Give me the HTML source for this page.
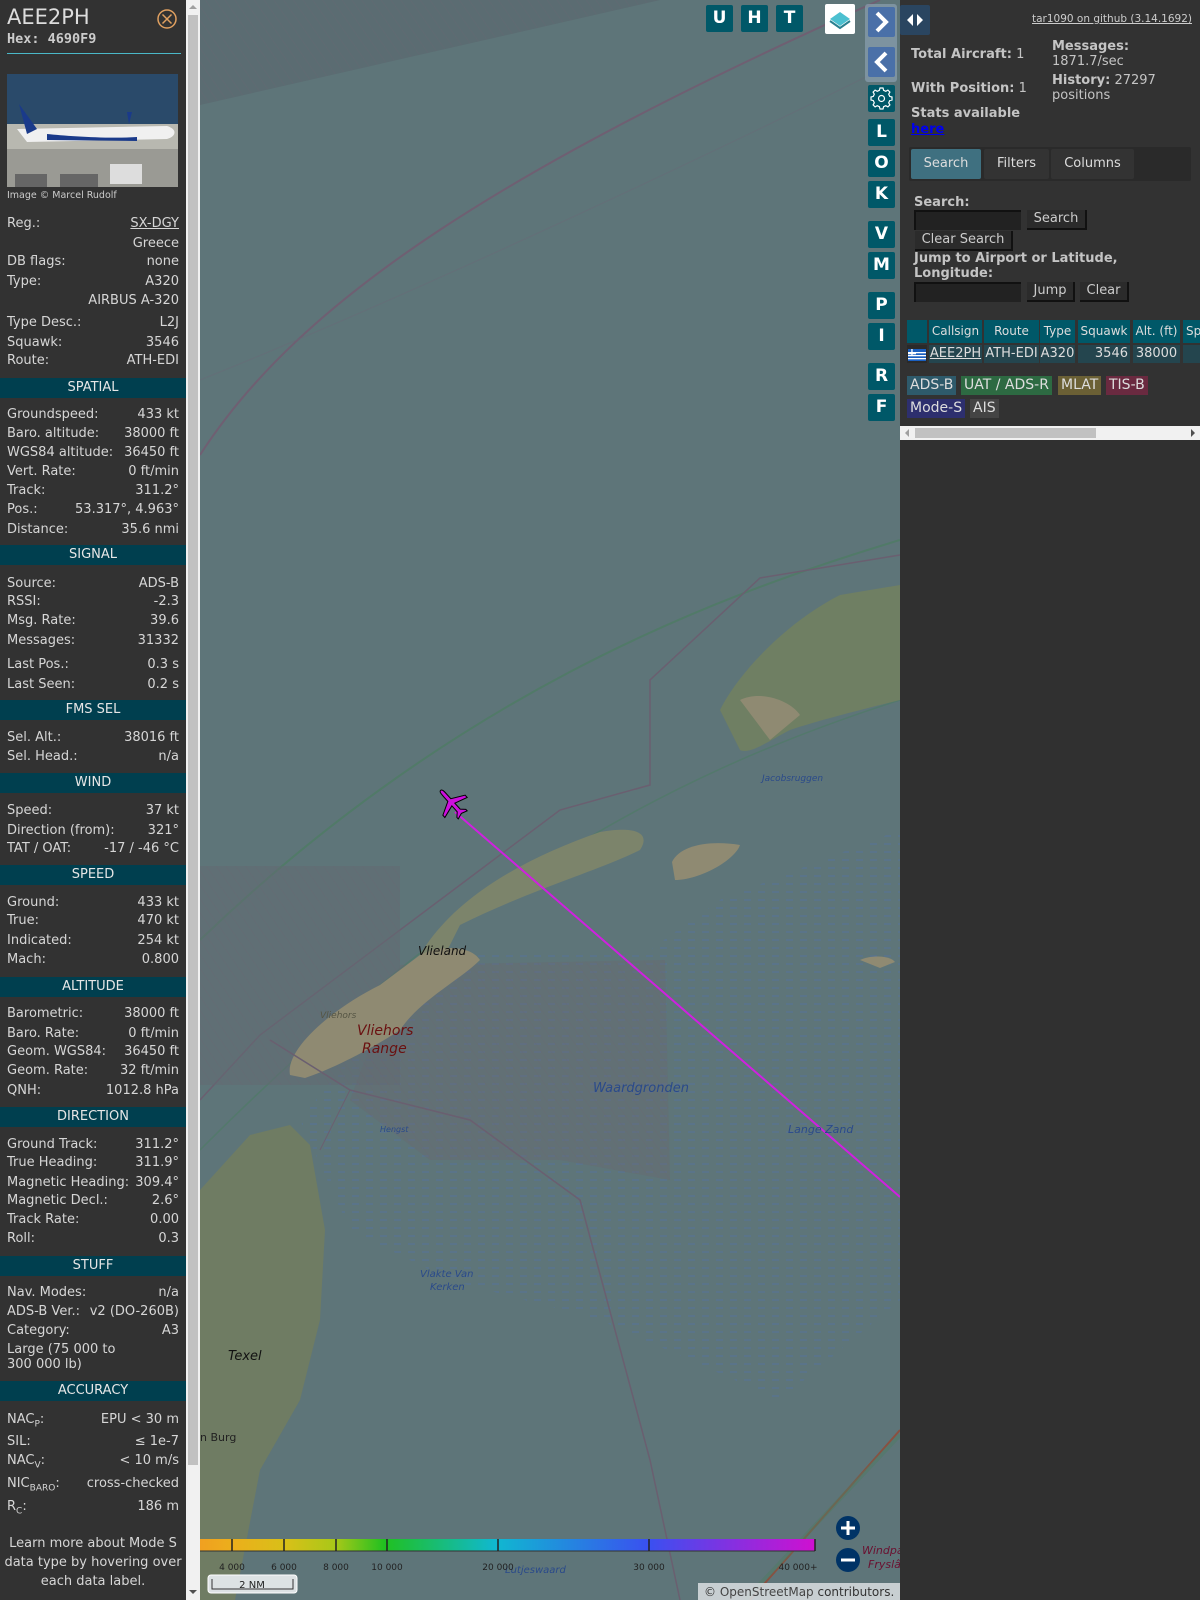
<!DOCTYPE html>
<html><head><meta charset="utf-8"><style>
*{box-sizing:border-box;margin:0;padding:0}
body{width:1200px;height:1600px;overflow:hidden;background:#5e7579;font-family:"DejaVu Sans","Liberation Sans",sans-serif;position:relative}
#left{position:absolute;left:0;top:0;width:186px;height:1600px;background:#323232;color:#d6d6d6;font-size:13px}
.r{position:absolute;left:7px;right:7px;height:16px;line-height:16px;white-space:nowrap;margin-top:2px}
.r b{position:absolute;right:0;top:0;font-weight:normal}
.h{position:absolute;left:0;width:186px;height:20px;line-height:20px;background:#003f4f;text-align:center;color:#e6e6e6;font-size:13px;margin-top:1px}
#lsb{position:absolute;left:186px;top:0;width:14px;height:1600px;background:#f1f1f1}
#map{position:absolute;left:200px;top:0;width:700px;height:1600px;overflow:hidden}
.btn{position:absolute;width:27px;height:27px;background:#005868;color:#fff;font-weight:bold;font-size:17px;text-align:center;line-height:27px;border-radius:2px}
#right{position:absolute;left:900px;top:0;width:300px;height:1600px;background:#303030;color:#c4c4c4;font-size:13px}
#rp{position:absolute;left:0;top:0;width:300px;height:426px;background:#323232}
.a{position:absolute;white-space:nowrap}
.tb{position:absolute;height:30px;line-height:30px;text-align:center;font-size:13px;color:#ddd;border-radius:2px}
.inp{position:absolute;height:20px;background:#222;border-top:2px solid #111;border-left:2px solid #111}
.bt{position:absolute;height:20px;line-height:18px;background:#2b2b2b;color:#ccc;border-right:2px solid #111;border-bottom:2px solid #111;font-size:13px;text-align:center}
.th{position:absolute;top:320px;height:23px;line-height:23px;background:#005868;color:#ddd;font-size:12px;text-align:center}
.td{position:absolute;top:345px;height:18px;line-height:18px;background:#24454e;color:#ddd;font-size:13px}
.lg{position:absolute;height:19px;line-height:19px;font-size:14px;color:#ddd;padding:0 3px}
</style></head><body>

<div id="map">
<svg width="700" height="1600" viewBox="200 0 700 1600" xmlns="http://www.w3.org/2000/svg">
<defs>
<pattern id="ht" width="8" height="8" patternUnits="userSpaceOnUse" patternTransform="rotate(-35)"><line x1="0" y1="0" x2="0" y2="8" stroke="#6d6470" stroke-width="1" opacity=".4"/></pattern>
<pattern id="wd" width="14" height="8" patternUnits="userSpaceOnUse"><line x1="2" y1="4" x2="9" y2="4" stroke="#4a6ec0" stroke-width="1" opacity=".45"/></pattern>
</defs>
<rect x="200" y="0" width="700" height="1600" fill="#5e7579"/>
<polygon points="200,0 660,0 200,105" fill="#5b6c72"/>
<polygon points="200,0 660,0 200,105" fill="url(#ht)"/>
<path d="M200,455 C300,300 500,170 880,0" stroke="#6f5f72" stroke-width="2" fill="none"/>
<path d="M200,380 C400,300 700,160 900,60" stroke="#6a6a78" stroke-width="1" fill="none" opacity=".5"/>
<path d="M200,940 C450,700 700,600 900,540" stroke="#4d7c64" stroke-width="2" fill="none" opacity=".8"/>
<path d="M200,1150 C450,900 650,780 900,700" stroke="#4d7c64" stroke-width="1.5" fill="none" opacity=".6"/>
<polyline points="200,1100 260,1035 480,870 560,810 650,785 650,680 760,578 900,555" stroke="#6a5f70" stroke-width="1.5" fill="none"/>
<polygon points="380,1020 470,950 650,950 720,900 900,830 900,1300 780,1400 600,1320 450,1280 350,1230 300,1120" fill="url(#wd)"/>
<polygon points="400,965 665,960 670,1180 560,1160 430,1160 350,1100" fill="#6a6670" opacity=".35"/>
<polygon points="400,965 665,960 670,1180 560,1160 430,1160 350,1100" fill="url(#ht)"/>
<polygon points="200,866 400,866 400,1085 200,1085" fill="#626a72" opacity=".5"/>
<polygon points="200,866 400,866 400,1085 200,1085" fill="url(#ht)"/>
<path d="M720,710 C740,670 790,620 840,595 L900,585 L900,700 C860,710 820,720 790,730 C770,740 750,755 740,750 Z" fill="#6f7f63"/>
<path d="M740,700 C760,690 790,700 800,715 L770,740 Z" fill="#8f8a72"/>
<path d="M672,862 C680,845 710,840 740,845 C735,860 700,880 675,880 Z" fill="#8f8a72"/>
<path d="M417,960 C450,900 520,860 600,832 C640,825 650,835 640,850 C600,870 530,890 460,925 L445,955 Z" fill="#7c846b"/>
<path d="M290,1075 C285,1050 330,1010 380,985 L420,955 C440,945 470,945 480,960 C460,980 420,1000 400,1030 C370,1050 330,1070 305,1078 Z" fill="#8f8a72"/>
<path d="M200,1190 L250,1135 L290,1125 L310,1145 L325,1230 L320,1320 L300,1400 L260,1470 L235,1600 L200,1600 Z" fill="#6f7c63"/>
<path d="M860,960 C870,955 890,955 895,962 L880,968 Z" fill="#8f8a72"/>
<path d="M320,1150 L350,1090" stroke="#6a5f70" stroke-width="1" fill="none"/>
<polyline points="270,1040 350,1090 470,1120 580,1200 650,1460 680,1600" stroke="#6a5f70" stroke-width="1.5" fill="none"/>
<path d="M750,1600 L900,1430" stroke="#8a5040" stroke-width="2" fill="none"/>
<path d="M745,1600 L900,1435" stroke="#4d7c64" stroke-width="4" fill="none" opacity=".5"/>
<line x1="455" y1="812" x2="900" y2="1197" stroke="#d020e0" stroke-width="2"/>
<g transform="translate(452,803) rotate(-42)" fill="#cc10dd" stroke="#000" stroke-width="1">
<path d="M0,-17 C2,-17 2,-14 2,-10 L2,-4 L15,3 L15,6 L2,2 L2,10 L6,14 L6,16 L0,14 L-6,16 L-6,14 L-2,10 L-2,2 L-15,6 L-15,3 L-2,-4 L-2,-10 C-2,-14 -2,-17 0,-17 Z"/>
</g>
<g font-family="DejaVu Sans" font-style="italic">
<text x="418" y="955" font-size="12" fill="#111">Vlieland</text>
<text x="320" y="1018" font-size="9" fill="#554">Vliehors</text>
<text x="357" y="1035" font-size="14" fill="#6a1010">Vliehors</text>
<text x="362" y="1053" font-size="14" fill="#6a1010">Range</text>
<text x="593" y="1092" font-size="13" fill="#2a4a8a">Waardgronden</text>
<text x="788" y="1133" font-size="11" fill="#2a4a8a">Lange Zand</text>
<text x="228" y="1360" font-size="13" fill="#111">Texel</text>
<text x="200" y="1441" font-size="11" fill="#222" font-style="normal">n Burg</text>
<text x="762" y="781" font-size="9" fill="#2a4a8a">Jacobsruggen</text>
<text x="420" y="1277" font-size="10" fill="#2a4a8a">Vlakte Van</text>
<text x="430" y="1290" font-size="10" fill="#2a4a8a">Kerken</text>
<text x="505" y="1573" font-size="10" fill="#2a4a8a">Lutjeswaard</text>
<text x="380" y="1132" font-size="8" fill="#2a4a8a">Hengst</text>
<text x="862" y="1554" font-size="11" fill="#6a1030">Windpa</text>
<text x="868" y="1568" font-size="11" fill="#6a1030">Fryslâ</text>
</g>
<defs><linearGradient id="cb" x1="0" x2="1"><stop offset="0" stop-color="#f0a020"/><stop offset=".05" stop-color="#ecae1c"/><stop offset=".14" stop-color="#d8c018"/><stop offset=".22" stop-color="#a8c818"/><stop offset=".3" stop-color="#20c020"/><stop offset=".48" stop-color="#10b8d0"/><stop offset=".73" stop-color="#3a50f0"/><stop offset="1" stop-color="#d010d0"/></linearGradient></defs>
<rect x="200" y="1539" width="615" height="12" fill="url(#cb)"/>
<line x1="200" y1="1551" x2="815" y2="1551" stroke="#333" stroke-width="1"/>
<g stroke="#222" stroke-width="1.5"><line x1="232" y1="1539" x2="232" y2="1551"/><line x1="284" y1="1539" x2="284" y2="1551"/><line x1="336" y1="1539" x2="336" y2="1551"/><line x1="387" y1="1539" x2="387" y2="1551"/><line x1="498" y1="1539" x2="498" y2="1551"/><line x1="649" y1="1539" x2="649" y2="1551"/><line x1="815" y1="1539" x2="815" y2="1551"/></g>
<g font-size="9" fill="#222" text-anchor="middle" font-family="DejaVu Sans"><text x="232" y="1570">4 000</text><text x="284" y="1570">6 000</text><text x="336" y="1570">8 000</text><text x="387" y="1570">10 000</text><text x="498" y="1570">20 000</text><text x="649" y="1570">30 000</text><text x="798" y="1570">40 000+</text></g>
<rect x="208" y="1575" width="89" height="18" rx="3" fill="#dde2e4" stroke="#fff"/>
<path d="M212,1579 V1589 H293 V1579" stroke="#333" fill="none"/>
<text x="252" y="1588" font-size="10" text-anchor="middle" fill="#222" font-family="DejaVu Sans">2 NM</text>
<circle cx="848" cy="1528" r="12" fill="#003366"/><path d="M841,1528 H855 M848,1521 V1535" stroke="#fff" stroke-width="3"/>
<circle cx="848" cy="1560" r="12" fill="#003366"/><path d="M841,1560 H855" stroke="#fff" stroke-width="3"/>
<rect x="698" y="1583" width="202" height="17" fill="#d4d9db" opacity=".9"/>
<text x="704" y="1596" font-size="12" fill="#333" font-family="DejaVu Sans">© <tspan fill="#444">OpenStreetMap</tspan> contributors.</text>
</svg>
</div>

<div class="btn" style="left:706px;top:5px">U</div>
<div class="btn" style="left:741px;top:5px">H</div>
<div class="btn" style="left:776px;top:5px">T</div>
<div style="position:absolute;left:825px;top:4px;width:30px;height:30px;background:#fff;border-radius:2px">
<svg width="30" height="30"><path d="M15,8 L25,15 L15,22 L5,15 Z" fill="#4cc0d0"/><path d="M5,17 L15,24 L25,17" stroke="#2a8090" stroke-width="2" fill="none"/></svg></div>
<div style="position:absolute;left:865px;top:4px;width:32px;height:78px;background:#8aa0b0;border-radius:3px;opacity:.7"></div>
<div style="position:absolute;left:868px;top:7px;width:27px;height:30px;background:#4a70a8;border-radius:2px"><svg width="27" height="30"><path d="M9,6 L18,15 L9,24" stroke="#fff" stroke-width="4" fill="none"/></svg></div>
<div style="position:absolute;left:868px;top:47px;width:27px;height:30px;background:#4a70a8;border-radius:2px"><svg width="27" height="30"><path d="M18,6 L9,15 L18,24" stroke="#fff" stroke-width="4" fill="none"/></svg></div>
<div class="btn" style="left:868px;top:85px"><svg width="27" height="27"><circle cx="13.5" cy="13.5" r="3" stroke="#fff" stroke-width="1.2" fill="none"/><path d="M12,5 H15 L15.6,7.3 L17.8,8.3 L19.9,7.1 L21.9,9.1 L20.7,11.2 L21.7,13.4 L24,14 V17 L21.7,17.6 L20.7,19.8 L21.9,21.9 L19.9,23.9 L17.8,22.7 L15.6,23.7 L15,26 H12 L11.4,23.7 L9.2,22.7 L7.1,23.9 L5.1,21.9 L6.3,19.8 L5.3,17.6 L3,17 V14 L5.3,13.4 L6.3,11.2 L5.1,9.1 L7.1,7.1 L9.2,8.3 L11.4,7.3 Z" transform="translate(0,-2)" stroke="#fff" stroke-width="1.2" fill="none"/></svg></div>
<div class="btn" style="left:868px;top:119px">L</div>
<div class="btn" style="left:868px;top:150px">O</div>
<div class="btn" style="left:868px;top:181px">K</div>
<div class="btn" style="left:868px;top:221px">V</div>
<div class="btn" style="left:868px;top:252px">M</div>
<div class="btn" style="left:868px;top:292px">P</div>
<div class="btn" style="left:868px;top:323px">I</div>
<div class="btn" style="left:868px;top:363px">R</div>
<div class="btn" style="left:868px;top:394px">F</div>

<div id="left">
<div class="a" style="left:7px;top:5px;font-size:21px;color:#ddd">AEE2PH</div>
<div class="a" style="left:7px;top:31px;font-size:13.5px;font-weight:bold;font-family:'DejaVu Sans Mono',monospace;color:#ccc">Hex: 4690F9</div>
<svg class="a" style="left:156px;top:8px" width="22" height="22"><circle cx="11" cy="11" r="9" stroke="#e0a060" stroke-width="1.5" fill="none"/><path d="M6.5,6.5 L15.5,15.5 M15.5,6.5 L6.5,15.5" stroke="#e0a060" stroke-width="1.5"/></svg>
<div class="a" style="left:7px;top:53px;width:174px;height:1px;background:#4ab8c8"></div>
<svg class="a" style="left:7px;top:74px" width="171" height="113">
<rect width="171" height="50" fill="#2a4a6a"/><rect y="50" width="171" height="63" fill="#b8b8b0"/>
<rect y="75" width="171" height="38" fill="#9a9a94"/>
<path d="M10,55 L160,52 C170,55 170,62 160,65 L20,68 Z" fill="#f0f0f0"/>
<path d="M12,30 L30,55 L20,60 Z" fill="#1a3a8a"/><path d="M40,60 C60,62 100,65 130,63 L130,67 L40,66 Z" fill="#1a3a8a"/>
<path d="M120,38 L125,38 L122,50 Z" fill="#1a3a8a"/>
<rect x="8" y="100" width="32" height="13" fill="#666"/><rect x="53" y="100" width="38" height="13" fill="#666"/><rect x="103" y="90" width="32" height="20" fill="#ddd"/>
</svg>
<div class="a" style="left:7px;top:190px;font-size:9.5px;color:#ccc">Image © Marcel Rudolf</div>

<div class="r" style="top:214px">Reg.:<b style="text-decoration:underline">SX-DGY</b></div>
<div class="r" style="top:234px"><b>Greece</b></div>
<div class="r" style="top:252px">DB flags:<b>none</b></div>
<div class="r" style="top:272px">Type:<b>A320</b></div>
<div class="r" style="top:291px"><b>AIRBUS A-320</b></div>
<div class="r" style="top:313px">Type Desc.:<b>L2J</b></div>
<div class="r" style="top:333px">Squawk:<b>3546</b></div>
<div class="r" style="top:351px">Route:<b>ATH-EDI</b></div>
<div class="h" style="top:377px">SPATIAL</div>
<div class="r" style="top:405px">Groundspeed:<b>433 kt</b></div>
<div class="r" style="top:424px">Baro. altitude:<b>38000 ft</b></div>
<div class="r" style="top:443px">WGS84 altitude:<b>36450 ft</b></div>
<div class="r" style="top:462px">Vert. Rate:<b>0 ft/min</b></div>
<div class="r" style="top:481px">Track:<b>311.2°</b></div>
<div class="r" style="top:500px">Pos.:<b>53.317°, 4.963°</b></div>
<div class="r" style="top:520px">Distance:<b>35.6 nmi</b></div>
<div class="h" style="top:544px">SIGNAL</div>
<div class="r" style="top:574px">Source:<b>ADS-B</b></div>
<div class="r" style="top:592px">RSSI:<b>-2.3</b></div>
<div class="r" style="top:611px">Msg. Rate:<b>39.6</b></div>
<div class="r" style="top:631px">Messages:<b>31332</b></div>
<div class="r" style="top:655px">Last Pos.:<b>0.3 s</b></div>
<div class="r" style="top:675px">Last Seen:<b>0.2 s</b></div>
<div class="h" style="top:699px">FMS SEL</div>
<div class="r" style="top:728px">Sel. Alt.:<b>38016 ft</b></div>
<div class="r" style="top:747px">Sel. Head.:<b>n/a</b></div>
<div class="h" style="top:772px">WIND</div>
<div class="r" style="top:801px">Speed:<b>37 kt</b></div>
<div class="r" style="top:821px">Direction (from):<b>321°</b></div>
<div class="r" style="top:839px">TAT / OAT:<b>-17 / -46 °C</b></div>
<div class="h" style="top:864px">SPEED</div>
<div class="r" style="top:893px">Ground:<b>433 kt</b></div>
<div class="r" style="top:911px">True:<b>470 kt</b></div>
<div class="r" style="top:931px">Indicated:<b>254 kt</b></div>
<div class="r" style="top:950px">Mach:<b>0.800</b></div>
<div class="h" style="top:976px">ALTITUDE</div>
<div class="r" style="top:1004px">Barometric:<b>38000 ft</b></div>
<div class="r" style="top:1024px">Baro. Rate:<b>0 ft/min</b></div>
<div class="r" style="top:1042px">Geom. WGS84:<b>36450 ft</b></div>
<div class="r" style="top:1061px">Geom. Rate:<b>32 ft/min</b></div>
<div class="r" style="top:1081px">QNH:<b>1012.8 hPa</b></div>
<div class="h" style="top:1106px">DIRECTION</div>
<div class="r" style="top:1135px">Ground Track:<b>311.2°</b></div>
<div class="r" style="top:1153px">True Heading:<b>311.9°</b></div>
<div class="r" style="top:1173px">Magnetic Heading:<b>309.4°</b></div>
<div class="r" style="top:1191px">Magnetic Decl.:<b>2.6°</b></div>
<div class="r" style="top:1210px">Track Rate:<b>0.00</b></div>
<div class="r" style="top:1229px">Roll:<b>0.3</b></div>
<div class="h" style="top:1255px">STUFF</div>
<div class="r" style="top:1283px">Nav. Modes:<b>n/a</b></div>
<div class="r" style="top:1302px">ADS-B Ver.:<b>v2 (DO-260B)</b></div>
<div class="r" style="top:1321px">Category:<b>A3</b></div>
<div class="r" style="top:1340px">Large (75 000 to</div>
<div class="r" style="top:1355px">300 000 lb)</div>
<div class="h" style="top:1380px">ACCURACY</div>
<div class="r" style="top:1410px">NAC<sub style="font-size:9px">P</sub>:<b>EPU &lt; 30 m</b></div>
<div class="r" style="top:1432px">SIL:<b>≤ 1e-7</b></div>
<div class="r" style="top:1451px">NAC<sub style="font-size:9px">V</sub>:<b>&lt; 10 m/s</b></div>
<div class="r" style="top:1474px">NIC<sub style="font-size:9px">BARO</sub>:<b>cross-checked</b></div>
<div class="r" style="top:1497px">R<sub style="font-size:9px">C</sub>:<b>186 m</b></div>
<div class="a" style="left:0;top:1534px;width:186px;text-align:center;line-height:19px;white-space:normal">Learn more about Mode S data type by hovering over each data label.</div>
</div>
<div id="lsb"><div style="position:absolute;left:2px;top:15px;width:10px;height:1450px;background:#c1c1c1"></div>
<div style="position:absolute;left:3px;top:5px;border:4px solid transparent;border-bottom-color:#a0a0a0;border-top:0"></div>
<div style="position:absolute;left:3px;top:1590px;border:4px solid transparent;border-top-color:#505050;border-bottom:0"></div></div>

<div id="right">
<div id="rp">
<div style="position:absolute;left:0;top:5px;width:30px;height:30px;background:#2a4560;border-radius:2px"><svg width="30" height="30"><path d="M13,9 L7,15 L13,21 Z M17,9 L23,15 L17,21 Z" fill="#fff"/></svg></div>
<div class="a" style="right:8px;top:13px;font-size:10.5px;text-decoration:underline;color:#ccc">tar1090 on github (3.14.1692)</div>
<div class="a" style="left:11px;top:47px"><b>Total Aircraft:</b> 1</div>
<div class="a" style="left:152px;top:39px;line-height:15px"><b>Messages:</b><br>1871.7/sec</div>
<div class="a" style="left:11px;top:81px"><b>With Position:</b> 1</div>
<div class="a" style="left:152px;top:73px;line-height:15px"><b>History:</b> 27297<br>positions</div>
<div class="a" style="left:11px;top:106px;line-height:16px"><b>Stats available</b><br><b style="color:#0000ee;text-decoration:underline">here</b></div>
<div class="a" style="left:9px;top:147px;width:282px;height:34px;background:#2a2a2a;border-radius:2px"></div>
<div class="tb" style="left:11px;top:149px;width:70px;background:#3f7080">Search</div>
<div class="tb" style="left:84px;top:149px;width:65px;background:#333">Filters</div>
<div class="tb" style="left:151px;top:149px;width:83px;background:#333">Columns</div>
<div class="a" style="left:14px;top:195px;font-weight:bold">Search:</div>
<div class="inp" style="left:14px;top:210px;width:107px"></div>
<div class="bt" style="left:127px;top:210px;width:60px">Search</div>
<div class="bt" style="left:15px;top:231px;width:98px">Clear Search</div>
<div class="a" style="left:14px;top:251px;font-weight:bold;line-height:15px">Jump to Airport or Latitude,<br>Longitude:</div>
<div class="inp" style="left:14px;top:282px;width:107px"></div>
<div class="bt" style="left:127px;top:282px;width:48px">Jump</div>
<div class="bt" style="left:180px;top:282px;width:49px">Clear</div>
<div class="th" style="left:7px;width:20px"></div>
<div class="th" style="left:29px;width:53px">Callsign</div>
<div class="th" style="left:84px;width:55px">Route</div>
<div class="th" style="left:140px;width:35px">Type</div>
<div class="th" style="left:178px;width:52px">Squawk</div>
<div class="th" style="left:233px;width:47px">Alt. (ft)</div>
<div class="th" style="left:283px;width:17px;text-align:left;padding-left:3px">Sp</div>
<div class="td" style="left:7px;width:20px;background:#2a2a2a"><svg width="20" height="18"><rect x="1" y="4" width="18" height="12" fill="#1a5fc0"/><g fill="#fff"><rect x="1" y="7" width="18" height="1.3"/><rect x="1" y="10" width="18" height="1.3"/><rect x="1" y="13" width="18" height="1.3"/><rect x="1" y="8" width="8" height="1.3"/><rect x="4.3" y="4" width="1.3" height="7"/></g></svg></div>
<div class="td" style="left:29px;width:53px;text-align:center;text-decoration:underline">AEE2PH</div>
<div class="td" style="left:84px;width:55px;text-align:center">ATH-EDI</div>
<div class="td" style="left:140px;width:35px;text-align:center">A320</div>
<div class="td" style="left:178px;width:52px;text-align:right;padding-right:2px">3546</div>
<div class="td" style="left:233px;width:47px;text-align:center">38000</div>
<div class="td" style="left:283px;width:17px"></div>
<div class="lg" style="left:7px;top:376px;background:#2e5a6b">ADS-B</div>
<div class="lg" style="left:61px;top:376px;background:#2d6a42">UAT / ADS-R</div>
<div class="lg" style="left:158px;top:376px;background:#6b6035">MLAT</div>
<div class="lg" style="left:206px;top:376px;background:#6a2a40">TIS-B</div>
<div class="lg" style="left:7px;top:399px;background:#2d2f6e">Mode-S</div>
<div class="lg" style="left:70px;top:399px;background:#444">AIS</div>
</div>
<div style="position:absolute;left:0;top:426px;width:300px;height:14px;background:#f1f1f1">
<div style="position:absolute;left:15px;top:2px;width:181px;height:10px;background:#c1c1c1"></div>
<div style="position:absolute;left:5px;top:3px;border:4px solid transparent;border-right-color:#a0a0a0;border-left:0"></div>
<div style="position:absolute;right:5px;top:3px;border:4px solid transparent;border-left-color:#505050;border-right:0"></div>
</div>
</div>
</body></html>
